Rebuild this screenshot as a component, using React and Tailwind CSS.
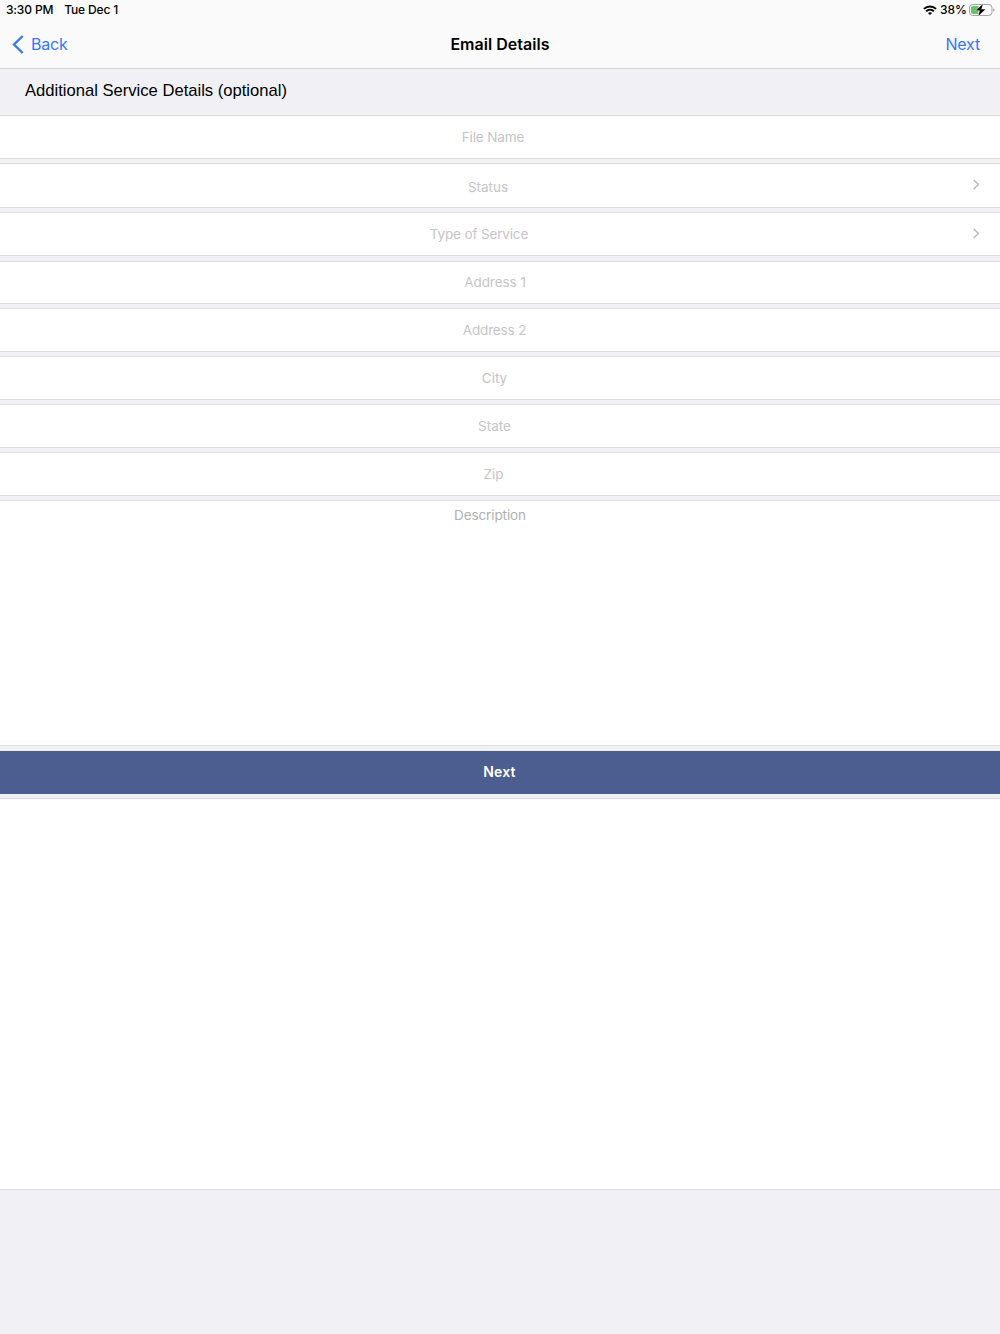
const rows = [
  { label: "File Name", row: "h-11", text: "pr-[14px] -tracking-[0.1px]" },
  { label: "Status", row: "h-[45px] mt-1", text: "pr-[24px] pt-[3px]", arrow: true },
  { label: "Type of Service", row: "h-11 mt-1", text: "pr-[42px] -tracking-[0.15px]", arrow: true },
  { label: "Address 1", row: "h-[43px] mt-[5px]", text: "pr-[10px] pb-px -tracking-[0.05px]" },
  { label: "Address 2", row: "h-11 mt-1", text: "pr-[11px] -tracking-[0.15px]" },
  { label: "City", row: "h-11 mt-1", text: "pr-[11px]" },
  { label: "State", row: "h-11 mt-1", text: "pr-[11px]" },
  { label: "Zip", row: "h-11 mt-1", text: "pr-[13px]" },
];

const Wifi = () => (
  <svg className="w-[14px] h-[10px]" viewBox="0 0 14 10" fill="none" stroke="#000" strokeWidth="1.9">
    <path d="M0.9 3.9C4.3 0.6 9.7 0.6 13.1 3.9" />
    <path d="M3.1 6.3C5.3 4.2 8.7 4.2 10.9 6.3" />
    <path d="M4.9 8C6.1 6.9 7.9 6.9 9.1 8L7 10Z" fill="#000" stroke="none" />
  </svg>
);

const Battery = () => (
  <svg className="w-[26px] h-[14px]" viewBox="0 0 26 14">
    <rect x="0.5" y="1.5" width="22.5" height="11" rx="3.2" fill="none" stroke="#a3a3a5" />
    <path d="M4 3H9.5V11H4Q2 11 2 9V5Q2 3 4 3Z" fill="#65c466" />
    <path d="M24.2 5.2Q25.6 5.8 25.6 7T24.2 8.8Z" fill="#a3a3a5" />
    <path d="M13.9 0.9L6.9 7.6H10.8L9.3 13.1L16.4 6.3H12.4Z" fill="#000" stroke="#fafafa" strokeWidth="1" paintOrder="stroke" />
  </svg>
);

const App = () => {
  return (
    <div className="min-h-[1334px] bg-[#f0f0f5] font-['Inter','Liberation_Sans',sans-serif] text-black">
      <header className="h-[69px] bg-[#fafafa] border-b border-[#d2d2d4]">
        <div className="h-5 flex items-center justify-between pl-[6px] pr-[5px] text-[12px] leading-5 font-medium">
          <div className="flex gap-[11px]">
            <span className="-tracking-[0.15px]">3:30 PM</span>
            <span className="-tracking-[0.15px]">Tue Dec 1</span>
          </div>
          <div className="flex items-center">
            <Wifi />
            <span className="ml-[3px] mr-[2px]">38%</span>
            <Battery />
          </div>
        </div>
        <div className="h-12 grid grid-cols-3 items-center text-[16px] text-[#3478f6]">
          <button className="flex items-center pl-3 text-left -tracking-[0.2px]">
            <svg className="w-3 h-[19px] mr-[7px]" viewBox="0 0 12 19" fill="none" stroke="#3478f6" strokeWidth="2.3">
              <path d="M10.7 1L2 9.5L10.7 18" />
            </svg>
            Back
          </button>
          <h1 className="text-center font-semibold text-black tracking-[0.03px]">Email Details</h1>
          <button className="pr-5 text-right -tracking-[0.2px]">Next</button>
        </div>
      </header>

      <h2 className="h-[46px] pl-[25px] pt-[10px] text-[16.6px] leading-6 font-['Liberation_Sans',sans-serif]">
        Additional Service Details (optional)
      </h2>

      {rows.map((item) => (
        <div key={item.label} className={`relative flex items-center bg-white border-y border-[#dddde0] ${item.row}`}>
          <div className={`w-full text-center text-[13.5px] leading-5 text-[#c5c5c7] ${item.text}`}>{item.label}</div>
          {item.arrow && (
            <svg className="absolute right-5 top-[15px] w-[7px] h-[11px]" viewBox="0 0 7 11" fill="none" stroke="#bcbcc0" strokeWidth="1.6">
              <path d="M0.8 1L5.4 5.5L0.8 10" />
            </svg>
          )}
        </div>
      ))}

      <div className="mt-1 h-[246px] bg-white border-y border-[#dddde0] pt-1 pr-5 text-center text-[13.5px] leading-5 text-[#b0b0b2] -tracking-[0.1px]">
        Description
      </div>

      <button className="mt-[5px] block w-full h-[43px] pb-[2px] pr-px bg-[#4c5d8f] text-center text-[14px] font-semibold tracking-[0.15px] text-white">
        Next
      </button>

      <div className="mt-1 h-[392px] bg-white border-y border-[#dddde0]" />
    </div>
  );
};

export default App;
